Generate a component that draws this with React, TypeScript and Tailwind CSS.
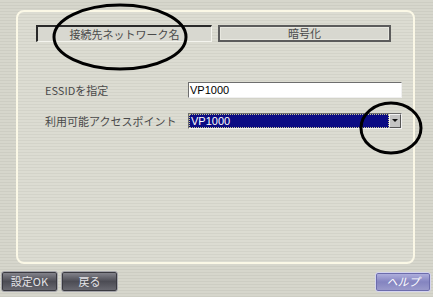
const jp = { fontFamily: '"Noto Sans CJK JP", "Liberation Sans", sans-serif' };
const latin = { fontFamily: '"Liberation Sans", "Noto Sans CJK JP", sans-serif' };

function DarkButton({ label }: { label: string }) {
  return (
    <button
      style={jp}
      className="h-[21px] w-[57px] rounded-[3px] border border-[#a4a4aa] bg-gradient-to-b from-[#8a8a92] via-[#4c4c54] to-[#6c6c74] text-[11px] leading-none text-[#e4e4e8] shadow-[inset_0_0_0_1px_#3a3a40]"
    >
      {label}
    </button>
  );
}

export default function App() {
  return (
    <div className="relative h-[297px] w-[433px] overflow-hidden bg-[repeating-linear-gradient(180deg,#d6d6cc_0px,#d6d6cc_2px,#cdcdc3_2px,#cdcdc3_3px)]">
      <div className="flex h-full flex-col pt-[10px]">
        {/* main panel */}
        <div className="ml-[16px] h-[254px] w-[399px] shrink-0 rounded-[8px] border-2 border-[#fbf8e6] bg-[repeating-linear-gradient(180deg,#dcdcd2_0px,#dcdcd2_2px,#d3d3c9_2px,#d3d3c9_3px)] pl-[18px] pt-[13px]">
          <div className="flex gap-[6px]">
            <div
              style={jp}
              className="flex h-[17px] w-[176px] items-center justify-center border-t-2 border-l-2 border-r border-b border-t-[#2a2a2a] border-l-[#2a2a2a] border-r-[#f4f4ee] border-b-[#f4f4ee] bg-[#d8d8d0] text-[11px] text-[#4a4a4a]"
            >
              接続先ネットワーク名
            </div>
            <div
              style={jp}
              className="flex h-[17px] w-[173px] items-center justify-center border-2 border-[#5c5c5c] bg-[#d8d8d0] text-[11px] text-[#4a4a4a] shadow-[inset_0_0_0_1px_#e8e8e0]"
            >
              暗号化
            </div>
          </div>

          <div className="mt-[40px] flex flex-col gap-[14px] pl-[9px]">
            <div className="flex items-center">
              <span style={jp} className="w-[143px] shrink-0 text-[11px] text-[#4a4a4a]">
                ESSIDを指定
              </span>
              <div
                style={latin}
                className="flex h-[16px] w-[214px] shrink-0 items-center border border-t-[#6e6e6e] border-l-[#6e6e6e] border-r-[#f0f0f0] border-b-[#f0f0f0] bg-white pl-[1px] text-[11px] text-black"
              >
                VP1000
              </div>
            </div>
            <div className="flex items-center">
              <span style={jp} className="w-[143px] shrink-0 text-[11px] text-[#4a4a4a]">
                利用可能アクセスポイント
              </span>
              <div className="flex h-[16px] w-[214px] shrink-0 border border-t-[#6e6e6e] border-l-[#6e6e6e] border-r-[#f0f0f0] border-b-[#f0f0f0] bg-white">
                <div
                  style={latin}
                  className="flex flex-1 items-center border border-dotted border-[#c8c890] bg-[#0c0c84] pl-[1px] text-[11px] text-white"
                >
                  VP1000
                </div>
                <div className="flex w-[12px] items-center justify-center border border-t-[#f4f4f4] border-l-[#f4f4f4] border-r-[#555] border-b-[#555] bg-[#c4c4c4]">
                  <svg width="6" height="4" viewBox="0 0 6 4">
                    <path d="M0 0h6L3 3z" fill="#111" />
                  </svg>
                </div>
              </div>
            </div>
          </div>
        </div>

        {/* bottom buttons */}
        <div className="mt-[7px] flex items-center px-[1px]">
          <div className="flex gap-[3px]">
            <DarkButton label="設定OK" />
            <DarkButton label="戻る" />
          </div>
          <button
            style={jp}
            className="ml-auto mr-[1px] h-[20px] w-[56px] rounded-[3px] border border-[#d4d4ee] bg-gradient-to-b from-[#b4b4e0] via-[#8484c0] to-[#9c9ccc] text-[11px] italic leading-none text-white shadow-[inset_0_0_0_1px_#6c6cac]"
          >
            ヘルプ
          </button>
        </div>
      </div>

      {/* annotation ellipses */}
      <svg className="pointer-events-none absolute left-0 top-0" width="433" height="297">
        <ellipse cx="120" cy="37" rx="66" ry="32" fill="none" stroke="#000" strokeWidth="3" />
        <ellipse cx="391" cy="128" rx="30" ry="25" fill="none" stroke="#000" strokeWidth="3" />
      </svg>
    </div>
  );
}
